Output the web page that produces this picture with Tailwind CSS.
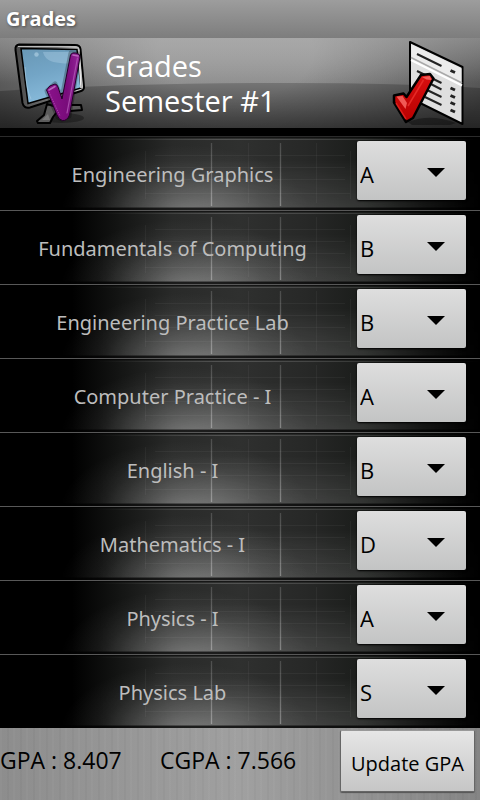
<!DOCTYPE html>
<html lang="en">
<head>
<meta charset="utf-8">
<meta name="viewport" content="width=device-width, initial-scale=1">
<title>Grades</title>
<script src="https://cdn.jsdelivr.net/npm/@tailwindcss/browser@4"></script>
</head>
<body class="flex min-h-screen flex-col bg-black font-['Open_Sans','Noto_Sans',sans-serif]">

<svg class="absolute h-0 w-0" aria-hidden="true">
  <defs>
    <radialGradient id="glow" gradientUnits="userSpaceOnUse" cx="0" cy="0" r="1" gradientTransform="translate(185 78) scale(125 70)">
      <stop offset="0" stop-color="#fff" stop-opacity=".28"/>
      <stop offset=".3" stop-color="#fff" stop-opacity=".17"/>
      <stop offset=".65" stop-color="#fff" stop-opacity=".06"/>
      <stop offset="1" stop-color="#fff" stop-opacity="0"/>
    </radialGradient>
    <linearGradient id="base">
      <stop offset=".15" stop-color="#000"/>
      <stop offset=".25" stop-color="#141514"/>
      <stop offset=".36" stop-color="#292a29"/>
      <stop offset=".5" stop-color="#2f302f"/>
      <stop offset=".64" stop-color="#272827"/>
      <stop offset=".76" stop-color="#1a1c1a"/>
      <stop offset=".88" stop-color="#080908"/>
      <stop offset=".98" stop-color="#000"/>
    </linearGradient>
    <linearGradient id="floor">
      <stop offset=".2" stop-color="#fff" stop-opacity="0"/>
      <stop offset=".45" stop-color="#fff" stop-opacity=".17"/>
      <stop offset=".75" stop-color="#fff" stop-opacity=".12"/>
      <stop offset="1" stop-color="#fff" stop-opacity="0"/>
    </linearGradient>
    <linearGradient id="lift" x2="0" y2="1">
      <stop offset=".3" stop-color="#000"/>
      <stop offset="1" stop-color="#fff"/>
    </linearGradient>
    <mask id="rise"><rect width="480" height="73" fill="url(#lift)"/></mask>
    <linearGradient id="fade" x2="0" y2="1">
      <stop offset="0" stop-color="#fff" stop-opacity=".14"/>
      <stop offset="1" stop-color="#fff" stop-opacity=".28"/>
    </linearGradient>
    <symbol id="tile" viewBox="0 0 480 73" preserveAspectRatio="none">
      <rect width="480" height="73" fill="url(#base)"/>
      <rect width="480" height="73" fill="url(#glow)"/>
      <rect width="480" height="73" fill="url(#floor)" mask="url(#rise)"/>
      <rect y="2" width="480" height="1" fill="url(#floor)"/>
      <path d="M60 0H420V1H60Z" fill="#000" opacity=".5"/>
      <path d="M155 18.500H345M155 30.500H345M155 42.500H345M145 56.500H350M145.500 14V62M248.500 6V66M316.500 6V66M350.500 14V62" stroke="#fff" stroke-opacity=".045" fill="none"/>
      <rect x="210" y="6" width="3" height="63" fill="url(#fade)" opacity=".18"/>
      <rect x="279" y="6" width="3" height="63" fill="url(#fade)" opacity=".18"/>
      <rect x="211" y="6" width="1" height="63" fill="url(#fade)"/>
      <rect x="280" y="6" width="1" height="63" fill="url(#fade)"/>
      <path d="M0 70H480V71H0Z" fill="#000" opacity=".35"/>
      <path d="M0 71H480V73H0Z" fill="#000" opacity=".75"/>
    </symbol>
  </defs>
</svg>

<div class="flex h-[38px] items-center bg-linear-to-b from-[#9d9d9d] to-[#7d7d7d] px-1.5">
  <span class="text-xl font-bold text-white [text-shadow:1px_1px_3px_#444]">Grades</span>
</div>

<header class="relative flex h-[90px] items-center justify-between px-3">
  <svg class="absolute inset-0 h-full w-full" viewBox="0 0 480 90" preserveAspectRatio="none" aria-hidden="true">
    <defs>
      <linearGradient id="h1" x2="0" y2="1">
        <stop offset="0" stop-color="#a8a8a8"/><stop offset=".55" stop-color="#8e8e8e"/>
      </linearGradient>
      <linearGradient id="h2" x2="0" y2="1">
        <stop offset="0" stop-color="#747474"/><stop offset="1" stop-color="#404040"/>
      </linearGradient>
      <radialGradient id="h3" gradientUnits="userSpaceOnUse" cx="0" cy="0" r="1" gradientTransform="translate(235 15) scale(260 150)">
        <stop offset=".3" stop-color="#000" stop-opacity="0"/><stop offset="1" stop-color="#000" stop-opacity=".42"/>
      </radialGradient>
      <linearGradient id="h4" x2="0" y2="1">
        <stop offset="0" stop-color="#a8a8a8" stop-opacity=".5"/><stop offset=".5" stop-color="#a8a8a8" stop-opacity="0"/>
      </linearGradient>
    </defs>
    <rect width="480" height="90" fill="url(#h1)"/>
    <path d="M0 53Q130 45 290 45Q400 45 480 50V90H0Z" fill="url(#h2)"/>
    <rect width="480" height="90" fill="url(#h3)"/>
    <rect width="480" height="90" fill="url(#h4)"/>
  </svg>

  <div class="relative flex items-center gap-[17px]">
    <svg class="h-[88px] w-[76px]" viewBox="12 38 76 88" role="img" aria-label="Monitor with check mark">
      <defs>
        <linearGradient id="scr" x2=".3" y2="1"><stop offset="0" stop-color="#6897b5"/><stop offset=".5" stop-color="#73a5c6"/><stop offset="1" stop-color="#88bbdb"/></linearGradient>
        <linearGradient id="frm"><stop offset="0" stop-color="#4a4a4a"/><stop offset=".6" stop-color="#777"/><stop offset="1" stop-color="#ddd"/></linearGradient>
        <linearGradient id="pur"><stop offset="0" stop-color="#8b128b"/><stop offset=".6" stop-color="#790c7b"/><stop offset="1" stop-color="#94259a"/></linearGradient>
      </defs>
      <ellipse cx="62" cy="117" rx="22" ry="5" fill="#000" opacity=".3"/>
      <path d="M47 103L44 114L37 120L38 122H50L53 116L60 107ZM62 104H81L82 109L70 110Z" fill="#5b5b5b" stroke="#000" stroke-width="2" stroke-linejoin="round"/>
      <path d="M42 119L48 113L50 119Z" fill="#777"/>
      <path d="M19 43.500L75 44Q80 44 80.500 48L84 86Q84 89 81 90L30 106.500Q24 108 22.500 102L15.500 49Q15 44 19 43.500Z" fill="url(#frm)" stroke="#000" stroke-width="2"/>
      <path d="M18 45.500H75Q78 46 79 49L82 86" fill="none" stroke="#bbb" stroke-width="1"/>
      <path d="M21 47.500L77 48.500L81 87L28 102.500Z" fill="url(#scr)" stroke="#000" stroke-width="1.500"/>
      <path d="M43 51Q45 61 60 62Q69 63 73 62V51Z" fill="#aed0e5" opacity=".4"/>
      <circle cx="36.500" cy="53.500" r="2.200" fill="#b5d5e8" opacity=".6"/>
      <path d="M25 66Q26 88 31 98" stroke="#b5d5e8" fill="none" opacity=".5"/>
      <path d="M79 54L81 87" stroke="#eee" stroke-width="1.500"/>
      <path d="M47 90L55 83L62 97L71 52L79 53L69 115L62 118L58 116Z" fill="none" stroke="#000" stroke-opacity=".25" stroke-width="5" stroke-linejoin="round"/>
      <path d="M46.500 89Q49 84 55 83Q57 83 58 86L62 98L70.500 54Q71.500 51 76 52Q80.500 53 80 56L69.500 114Q67 120 62.500 119.500Q59 119 57 114Z" fill="url(#pur)" stroke="#25002a" stroke-width="1"/>
      <path d="M77.500 57L67 112" stroke="#a84dac" stroke-width="1.200" fill="none" stroke-linecap="round"/>
      <path d="M73 54L78 55M49 89L55 85.500" stroke="#b968bd" stroke-width="1.600" fill="none" stroke-linecap="round"/>
      <path d="M49 91L60 115" stroke="#a84dac" stroke-width="1" stroke-dasharray="1 1" fill="none"/>
    </svg>
    <h1 class="text-[29px] leading-[35px] text-white">Grades<br>Semester #1</h1>
  </div>

  <svg class="relative h-[88px] w-[80px]" viewBox="388 38 80 88" role="img" aria-label="Report with check mark">
    <defs>
      <linearGradient id="red" x2="0" y2="1"><stop offset="0" stop-color="#d81010"/><stop offset="1" stop-color="#b80000"/></linearGradient>
    </defs>
    <path d="M408 121Q430 112 456 122L450 124H412Z" fill="#000" opacity=".35"/>
    <path d="M410 41L462.500 66V123L410 97Z" fill="#dfdfdf" stroke="#000" stroke-width="2" stroke-linejoin="round"/>
    <path d="M411.500 43.500L461.500 67.500V81L411.500 56.500Z" fill="#ececec"/>
    <path d="M411 56.500L462 82" stroke="#aaa" stroke-width="1.500"/>
    <path d="M411 59L462 84.500" stroke="#fff" stroke-width="2"/>
    <path d="M417 53L441.500 65M417 70L441.500 82M425 80L441.500 88.500M425 88L441.500 96M425 96L441.500 104" stroke="#222" stroke-width="2"/>
    <path d="M450.500 69.500L455 71.500M450.500 87L455 89M450.500 94.500L455 96.500M450.500 101.500L455 103.500M450.500 109L455 111" stroke="#222" stroke-width="3"/>
    <path d="M394 94.500L403.500 92.500L406.500 96L421 74L430 73L433.500 77.500L413 117L406 121L394 101.500Z" fill="url(#red)" stroke="#000" stroke-width="2.500" stroke-linejoin="round"/>
    <path d="M396.500 95.500L402.500 95L407 102L405.500 108ZM422 76L430 75L431.500 79L426.500 78.500Z" fill="#f05a55"/>
    <path d="M408 105L423.500 79" stroke="#e52a26" stroke-width="1.500"/>
    <path d="M396 102L406 118" stroke="#dc1f1c" stroke-width="1.500"/>
  </svg>
</header>

<main class="flex-1 bg-black pt-2">
  <ul id="courses" class="border-t border-[#2b2b2b]"></ul>
</main>

<footer class="relative -mt-px flex h-[72px] items-start bg-linear-to-r from-[#8d8d8d] via-[#a0a0a0] to-[#858585] text-black">
  <div class="absolute inset-0 bg-[repeating-linear-gradient(90deg,#ffffff07_0_2px,transparent_2px_7px,#00000007_7px_9px,transparent_9px_13px)]"></div>
  <p class="relative w-1/3 pt-4 text-[23px] leading-8 whitespace-nowrap">GPA : 8.407</p>
  <p class="relative flex-1 pt-4 text-[23px] leading-8 whitespace-nowrap">CGPA : 7.566</p>
  <button type="button" class="relative mt-0.5 mr-[5px] h-[62px] w-[135px] rounded-xs border border-[#666] border-t-[#999] bg-linear-to-b from-[#e6e6e6] to-[#c6c6c6] pt-1.5 text-xl whitespace-nowrap shadow-[0_1px_1px_#555]">Update GPA</button>
</footer>

<script>
  const courses = [
    ['Engineering Graphics', 'A'],
    ['Fundamentals of Computing', 'B'],
    ['Engineering Practice Lab', 'B'],
    ['Computer Practice - I', 'A'],
    ['English - I', 'B'],
    ['Mathematics - I', 'D'],
    ['Physics - I', 'A'],
    ['Physics Lab', 'S'],
  ];
  const grades = ['S', 'A', 'B', 'C', 'D', 'E'];
  document.getElementById('courses').innerHTML = courses.map(([name, grade], i) => `
    <li class="relative flex h-[74px] items-start border-b border-[#585858] pr-3.5">
      <svg class="absolute inset-0 h-full w-full" aria-hidden="true"><use href="#tile" width="100%" height="100%"/></svg>
      <label for="grade${i}" class="relative mr-3 flex-1 self-center pt-0.5 text-center font-['Noto_Sans',sans-serif] text-xl leading-7 text-[#bdbdbd]">${name}</label>
      <div class="relative mt-1 flex h-[59px] w-[109px] items-center">
        <select id="grade${i}" class="h-full w-full appearance-none rounded-xs bg-linear-to-b from-[#dedede] to-[#c3c4c4] pt-2 pl-[3px] text-[22px] text-black shadow-[0_1px_2px_#000]">
          ${grades.map(g => `<option${g === grade ? ' selected' : ''}>${g}</option>`).join('')}
        </select>
        <svg class="pointer-events-none absolute top-[27px] right-[21px] h-[9px] w-[18px]" viewBox="0 0 18 9" aria-hidden="true"><path d="M0 0H18L9 9Z"/></svg>
      </div>
    </li>`).join('');
</script>
</body>
</html>
